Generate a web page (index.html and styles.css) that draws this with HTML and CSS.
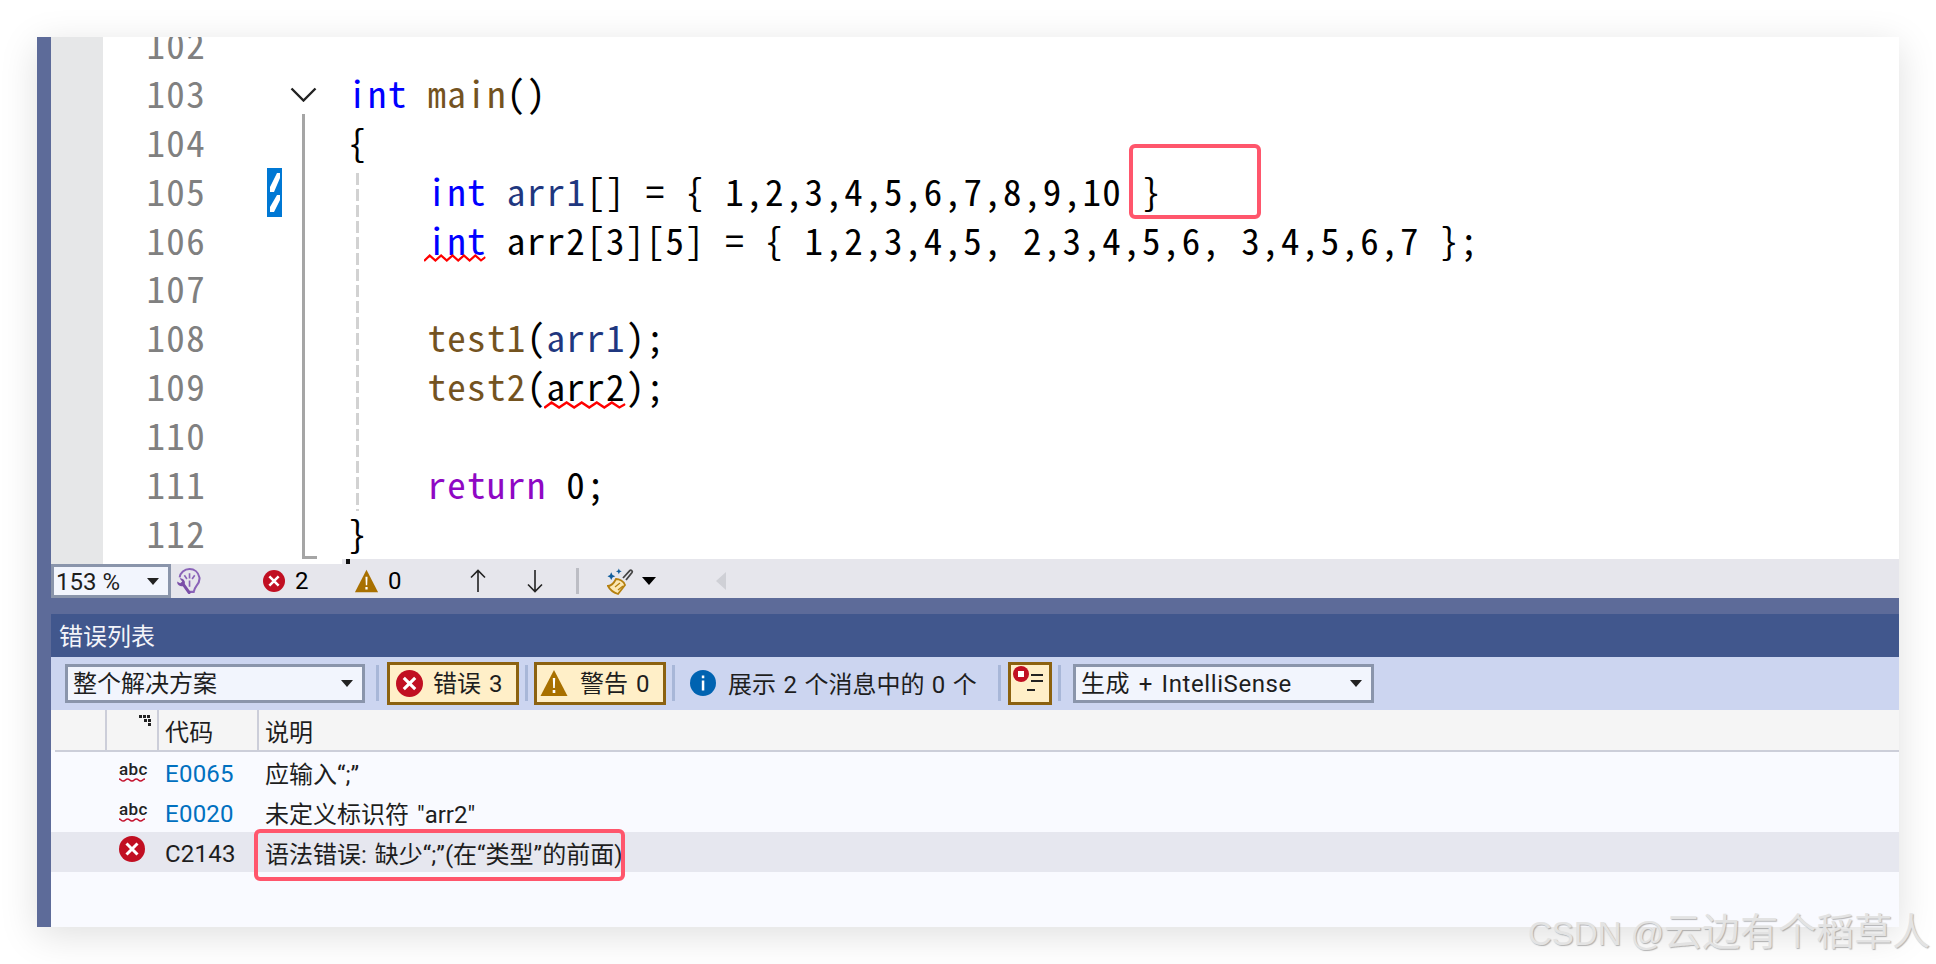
FILE: index.html
```html
<!DOCTYPE html>
<html lang="zh-CN">
<head>
<meta charset="utf-8">
<title>错误列表</title>
<link rel="stylesheet" href="styles.css">
</head>
<body>
<svg class="defs" width="0" height="0" aria-hidden="true">
  <defs>
    <symbol id="xc" viewBox="0 0 26 26"><circle cx="13" cy="13" r="13" fill="#c10f22"/><path d="M7.500 7.500 18.500 18.500M18.500 7.500 7.500 18.500" stroke="#fff" stroke-width="3" fill="none"/></symbol>
    <symbol id="warn" viewBox="0 0 28 28"><path d="M14 1 27.500 27H.5Z" fill="#a87000"/><path d="M12.800 9h2.400l-.4 10h-1.600zM12.700 21h2.600v3h-2.600z" fill="#fff"/></symbol>
    <symbol id="wave" viewBox="0 0 54 8" preserveAspectRatio="none"><path d="M0 7 5 1.500 10 6.500 15 1.500 20 6.500 25 1.500 30 6.500 35 1.500 40 6.500 45 1.500 50 6.500 54 3" fill="none" stroke="#f00" stroke-width="2"/></symbol>
  </defs>
</svg>
<main class="window">
  <section class="editor">
    <div class="gutter"></div>
    <div class="lines">
      <div class="line"><span class="ln">102</span><code class="code"></code></div>
      <div class="line"><span class="ln">103</span><code class="code"><b class="kw">int</b> <b class="fn">main</b>()</code></div>
      <div class="line"><span class="ln">104</span><code class="code">{</code></div>
      <div class="line"><span class="ln">105</span><code class="code">    <b class="kw">int</b> <b class="var">arr1</b>[] = { 1,2,3,4,5,6,7,8,9,10 }</code></div>
      <div class="line"><span class="ln">106</span><code class="code">    <span class="squig"><b class="kw">int</b><svg class="wave"><use href="#wave"/></svg></span> arr2[3][5] = { 1,2,3,4,5, 2,3,4,5,6, 3,4,5,6,7 };</code></div>
      <div class="line"><span class="ln">107</span><code class="code"></code></div>
      <div class="line"><span class="ln">108</span><code class="code">    <b class="fn">test1</b>(<b class="var">arr1</b>);</code></div>
      <div class="line"><span class="ln">109</span><code class="code">    <b class="fn">test2</b>(<span class="squig">arr2<svg class="wave"><use href="#wave"/></svg></span>);</code></div>
      <div class="line"><span class="ln">110</span><code class="code"></code></div>
      <div class="line"><span class="ln">111</span><code class="code">    <b class="ret">return</b> 0;</code></div>
      <div class="line"><span class="ln">112</span><code class="code">}</code></div>
    </div>
    <svg class="chevron" width="27" height="15" viewBox="0 0 27 15"><path d="M1.500 1.500 13.500 13.500 25.500 1.500" fill="none" stroke="#222" stroke-width="2.400"/></svg>
    <div class="fold"></div>
    <div class="guide"></div>
    <svg class="marker" width="15" height="49" viewBox="0 0 15 49"><rect width="15" height="49" fill="#0078d4"/><path d="M10 5h3v5L7 24H3v-5zM10 27h3v5L7 44H3v-5z" fill="#fff"/></svg>
    <div class="cap"><i class="cap-tick"></i></div>
  </section>

  <section class="status">
    <div class="combo combo-zoom"><span>153 %</span><i class="arrow"></i></div>
    <svg class="ic-bulb" width="25" height="27" viewBox="0 0 24 26"><path d="M12 23h5c.5-2.500 1-3.500 2.500-5.500 3-3.500 3.500-5.500 3-8.500C21.500 4 17.500 1 13 1 8 1 4 4.500 3.500 9" fill="none" stroke="#8a63b8" stroke-width="2"/><path d="M13 5v5M8 7l2.500 3.500M18 7l-2.500 3.500M13 12v6" fill="none" stroke="#8a63b8" stroke-width="1.600"/><path d="M1 13a4.500 4.500 0 0 0 5.500 4.500L11.500 24.500c1 1 3 .5 2.500-1.500L8.500 15.500A4.500 4.500 0 0 0 3.500 10L6 13l-2 1.800z" fill="#7b4fa8"/></svg>
    <svg class="ic-sx ml-err"><use href="#xc"/></svg><span class="num">2</span>
    <svg class="ic-sw ml-warn"><use href="#warn"/></svg><span class="num num-w">0</span>
    <svg class="nav nav-up" width="16" height="24" viewBox="0 0 16 24"><path d="M8 23V1.500M1 8.500 8 1.500l7 7" fill="none" stroke="#222" stroke-width="1.600"/></svg>
    <svg class="nav nav-down" width="16" height="24" viewBox="0 0 16 24"><path d="M8 1v21.500M1 15.500l7 7 7-7" fill="none" stroke="#222" stroke-width="1.600"/></svg>
    <i class="status-sep"></i>
    <svg class="broom" width="27" height="27" viewBox="0 0 27 27"><path d="M16 10 23 2.500c1-1 3 .5 2 2L19 12" fill="none" stroke="#444" stroke-width="1.800"/><path d="M9 11c3 0 8 2 9 6l-7 9C8 25 3 22 1 18c4 0 6-3 8-7z" fill="#fbe8b4" stroke="#b5800f" stroke-width="1.800"/><path d="M8 19l5-4M11 22l5-4" stroke="#b5800f" stroke-width="1.300"/><path d="M3 7l1.200-2.800L5.500 7l2.800 1.200-2.800 1.300L4.200 12 3 9.500.5 8.200zM11 2.500l.8-2 .9 2 2 .8-2 .9-.9 2-.8-2-2-.9z" fill="#0f5c9c"/></svg>
    <i class="tri-down"></i>
    <i class="tri-left"></i>
  </section>

  <div class="strip"></div>
  <header class="panel-title">错误列表</header>

  <section class="toolbar">
    <div class="combo combo-scope"><span>整个解决方案</span><i class="arrow"></i></div>
    <i class="sep sep-a"></i>
    <div class="tbtn"><svg class="ic-tx"><use href="#xc"/></svg><span>错误 3</span></div>
    <i class="sep sep-b"></i>
    <div class="tbtn tbtn-w"><svg class="ic-tw"><use href="#warn"/></svg><span>警告 0</span></div>
    <i class="sep sep-b"></i>
    <svg class="ic-info" width="26" height="26" viewBox="0 0 26 26"><circle cx="13" cy="13" r="13" fill="#0063b1"/><path d="M11.800 5.500h2.500v2.800h-2.500zM11.800 10.500h2.500V20.500h-2.500z" fill="#fff"/></svg>
    <span class="info-text">展示 2 个消息中的 0 个</span>
    <i class="sep"></i>
    <div class="tbtn tbtn-filter"><svg width="37" height="37" viewBox="0 0 37 37"><circle cx="10" cy="9" r="8" fill="#c10f22"/><rect x="7" y="6" width="6" height="6" fill="#fff"/><path d="M20 10h12M20 16h12M16 25h8" stroke="#222" stroke-width="2"/></svg></div>
    <i class="sep sep-b"></i>
    <div class="combo combo-build"><span>生成 + IntelliSense</span><i class="arrow"></i></div>
  </section>

  <section class="table">
    <div class="thead">
      <div class="cell c-a"></div>
      <div class="cell c-b"><svg class="sort" width="14" height="12" viewBox="0 0 14 12"><path d="M0 0h3v3H0zM4 0h3v3H4zM8 0h3v3H8zM5 4h3v3H5zM9 4h3v3H9zM9 8h3v3H9z" fill="#222"/></svg></div>
      <div class="cell c-c">代码</div>
      <div class="cell c-d">说明</div>
    </div>
    <div class="rule"></div>
    <div class="row"><div class="cell c-a"></div><div class="cell c-b"><span class="abc">abc<svg class="abc-wave" width="26" height="4" viewBox="0 0 26 4"><path d="M0 1c2 0 2 2 4.300 2s2-2 4.300-2 2 2 4.400 2 2-2 4.300-2 2 2 4.300 2 2-2 4.400-2" fill="none" stroke="#c4122e" stroke-width="1.500"/></svg></span></div><div class="cell c-c link">E0065</div><div class="cell c-d">应输入“;”</div></div>
    <div class="row"><div class="cell c-a"></div><div class="cell c-b"><span class="abc">abc<svg class="abc-wave" width="26" height="4" viewBox="0 0 26 4"><path d="M0 1c2 0 2 2 4.300 2s2-2 4.300-2 2 2 4.400 2 2-2 4.300-2 2 2 4.300 2 2-2 4.400-2" fill="none" stroke="#c4122e" stroke-width="1.500"/></svg></span></div><div class="cell c-c link">E0020</div><div class="cell c-d">未定义标识符 "arr2"</div></div>
    <div class="row row-sel"><div class="cell c-a"></div><div class="cell c-b"><svg class="ic-rx"><use href="#xc"/></svg></div><div class="cell c-c">C2143</div><div class="cell c-d">语法错误: 缺少“;”(在“类型”的前面)</div></div>
  </section>

  <div class="redbox redbox-a"></div>
  <div class="redbox redbox-b"></div>
</main>
<div class="watermark">CSDN @<span class="wm-cjk">云边有个稻草人</span></div>
</body>
</html>
```

FILE: styles.css
```css
* { box-sizing: border-box; }
html, body { margin: 0; height: 964px; overflow: hidden; background: #fff; }
body { position: relative; padding: 37px; font-family: Roboto, "Noto Sans CJK SC", sans-serif; font-size: 24px; color: #1e1e1e; }
.defs { position: absolute; }
i { display: block; font-style: normal; }

.window { position: relative; width: 1862px; height: 890px; display: flex; flex-direction: column; border-left: 14px solid #5d6b99; background: #f9faff; box-shadow: 0 8px 36px rgba(0, 0, 0, .13); }

/* editor */
.editor { position: relative; flex: none; height: 527px; display: flex; overflow: hidden; background: #fff; }
.gutter { flex: none; width: 52px; background: #e6e7e8; }
.lines { margin-top: -18px; font-family: "Noto Sans Mono CJK SC", "DejaVu Sans Mono", monospace; font-size: 37px; letter-spacing: 1.35px; }
.line { display: flex; height: 48.9px; line-height: 48.9px; white-space: pre; }
.ln { flex: none; width: 103px; text-align: right; color: #808080; }
.code { flex: none; margin-left: 142px; font: inherit; letter-spacing: inherit; color: #000; }
.code b { font-weight: 400; }
.kw { color: #00f; }
.fn { color: #74531f; }
.var { color: #1f377f; }
.ret { color: #8f08c4; }
.squig { position: relative; display: inline-block; }
.wave { position: absolute; left: -3px; bottom: 1px; width: calc(100% + 2px); height: 8px; overflow: visible; }
.chevron { position: absolute; left: 239px; top: 50px; }
.fold { position: absolute; left: 251px; top: 77px; width: 15px; height: 445px; border-left: 3px solid #a5a5a5; border-bottom: 3px solid #a5a5a5; }
.guide { position: absolute; left: 305px; top: 136px; width: 3px; height: 338px; background: repeating-linear-gradient(to bottom, #d2d2d2 0 12px, transparent 12px 16px); }
.marker { position: absolute; left: 216px; top: 131px; }
.cap { position: absolute; left: 291px; right: 0; bottom: 0; height: 5px; background: #e6e6ec; }
.cap-tick { width: 4px; height: 5px; margin-left: 4px; background: #111; }

/* status bar */
.status { flex: none; height: 34px; display: flex; align-items: center; background: #e6e6ec; color: #000; }
.combo { position: relative; flex: none; display: flex; align-items: center; border: 3px solid #8a95ab; background: #f2f5fd; padding-left: 5px; color: #1e1e1e; line-height: 1; }
.combo span { position: relative; top: 1px; }
.arrow { position: absolute; right: 9px; top: 50%; margin-top: -3px; border-style: solid; border-width: 7px 6px 0; border-color: #222 transparent transparent; }
.combo-zoom { width: 120px; height: 34px; padding-left: 2px; }
.ic-bulb { flex: none; margin-left: 5px; }
.ic-sx { flex: none; width: 22px; height: 22px; }
.ic-sw { flex: none; width: 25px; height: 24px; }
.ml-err { margin-left: 62px; }
.ml-warn { margin-left: 47px; }
.num { flex: none; margin-left: 10px; width: 12px; }
.num-w { margin-left: 9px; }
.nav { flex: none; }
.nav-up { margin-left: 70px; }
.nav-down { margin-left: 41px; }
.status-sep { flex: none; width: 3px; height: 26px; margin-left: 33px; background: #bcbdc4; }
.broom { flex: none; margin-left: 28px; }
.tri-down { flex: none; margin-left: 8px; border-style: solid; border-width: 8px 7px 0; border-color: #000 transparent transparent; }
.tri-left { flex: none; margin-left: 60px; border-style: solid; border-width: 9px 10px 9px 0; border-color: transparent #cfd0d6 transparent transparent; }

.strip { flex: none; height: 16px; background: #5d6b99; }
.panel-title { flex: none; height: 43px; padding-left: 8px; line-height: 47px; background: #41578d; color: #f4f5fa; }

/* toolbar */
.toolbar { flex: none; height: 53px; display: flex; align-items: center; padding: 0 0 1px 14px; background: #ccd5f0; word-spacing: 2px; }
.combo-scope { width: 300px; height: 39px; padding-left: 5px; }
.combo-build { width: 301px; height: 39px; margin-left: 12px; padding-left: 5px; letter-spacing: .6px; }
.sep { flex: none; width: 3px; height: 36px; margin-left: 7px; background: #a8b7d8; }
.sep-a { margin-left: 11px; }
.sep-b { margin-left: 6px; }
.tbtn { flex: none; display: flex; align-items: center; width: 132px; height: 43px; margin-left: 8px; padding-left: 6px; border: 3px solid #8c6210; background: #ffefc8; line-height: 1; }
.tbtn span { position: relative; top: 1px; }
.tbtn-filter { width: 44px; padding: 0; margin-left: 7px; }
.tbtn-filter svg { flex: none; margin-left: 0; }
.ic-tx { flex: none; width: 27px; height: 27px; margin-right: 10px; }
.ic-tw { flex: none; width: 28px; height: 28px; margin-right: 12px; }
.tbtn-w { padding-left: 3px; margin-left: 6px; }
.ic-info { flex: none; margin-left: 15px; }
.info-text { flex: none; width: 263px; margin-left: 12px; position: relative; top: -1px; word-spacing: 1.500px; }

/* table */
.table { flex: 1; display: flex; flex-direction: column; }
.thead { flex: none; height: 40px; display: flex; background: #f5f5f5; }
.rule { flex: none; height: 2px; margin-left: 4px; background: #ccced9; }
.row { flex: none; height: 40px; display: flex; }
.row-sel { background: #e6e7ef; }
.cell { flex: none; display: flex; align-items: center; }
.c-a { width: 54px; }
.c-b { position: relative; width: 52px; padding-left: 14px; }
.c-c { width: 100px; padding-left: 8px; letter-spacing: .25px; }
.row .c-c { padding-top: 3px; }
.c-d { flex: 1; padding-left: 8px; word-spacing: 2px; }
.thead .c-b, .thead .c-c, .thead .c-d { border-left: 2px solid #ccced9; padding-left: 6px; }
.thead .c-d { padding-left: 6px; }
.sort { position: absolute; left: 32px; top: 5px; }
.link { color: #0070c0; }
.abc { position: relative; display: block; width: 26px; margin-top: -7px; font: 500 17px/16px Roboto, sans-serif; letter-spacing: .4px; color: #222; }
.abc-wave { position: absolute; left: 0; top: 17px; }
.ic-rx { width: 26px; height: 26px; margin-top: -7px; }

/* annotations */
.redbox { position: absolute; border: 4px solid #ff566c; border-radius: 6px; }
.redbox-a { left: 1078px; top: 107px; width: 132px; height: 75px; }
.redbox-b { left: 203px; top: 792px; width: 371px; height: 52px; }
.watermark { position: absolute; left: 1528px; top: 911px; font: 33px/42px "Liberation Sans", "Noto Sans CJK SC", sans-serif; white-space: nowrap; color: #e3e3e3; text-shadow: 1px 1px 1px rgba(120, 120, 120, .55); }
.wm-cjk { font-size: 38px; }
```
